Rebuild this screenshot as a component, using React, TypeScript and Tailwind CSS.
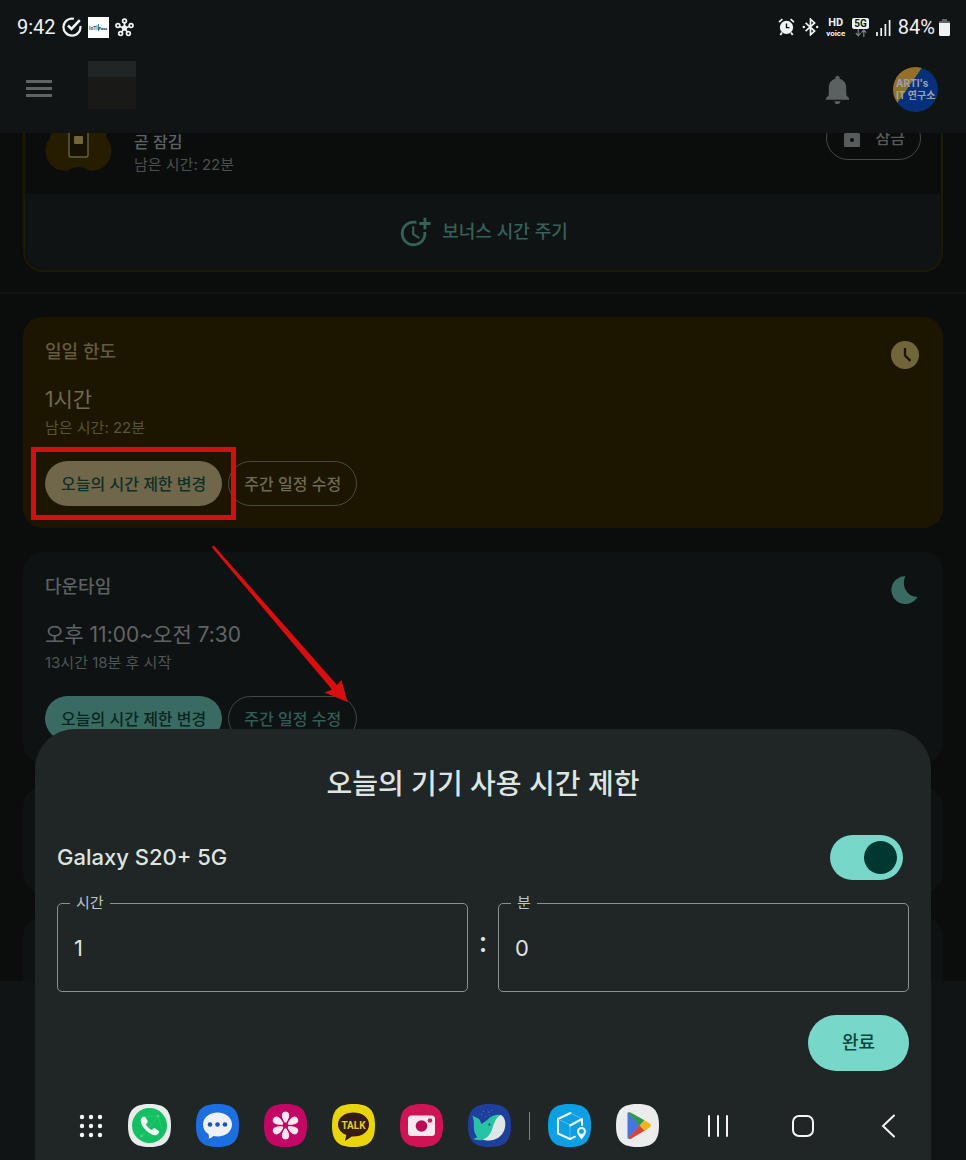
import React, { useState } from "react";
import { MdMoreTime, MdNotifications } from "react-icons/md";

const SQUIRCLE =
  "M21.5 0C37 0 43 6 43 21.5S37 43 21.5 43 0 37 0 21.5 6 0 21.5 0Z";

const StatusBar: React.FC = () => (
  <div className="flex h-[54px] items-center justify-between pl-[17px] pr-4 font-['Roboto'] text-xl text-[#f1f3f3]">
    <div className="flex items-center gap-[6px]">
      <span>9:42</span>
      <svg width="20" height="20" viewBox="0 0 20 20" fill="none" stroke="currentColor" strokeWidth="2.2">
        <path d="M12 1.8A8.5 8.5 0 1 0 18.4 9" />
        <path d="M6 8.5 9.5 12 17.8 3.2" strokeWidth="2.6" />
      </svg>
      <svg width="21" height="21" viewBox="0 0 21 21">
        <rect width="21" height="21" fill="#fdfefe" />
        <text x="1" y="12.5" fontSize="5" fontWeight="700" fill="#3b5560">IoT</text>
        <path d="M9 8v5M10.5 7v7" stroke="#2f8fb5" strokeWidth="1" />
        <text x="10.5" y="12.5" fontSize="4" fontWeight="700" fill="#222">Pass</text>
      </svg>
      <svg width="19" height="19" viewBox="0 0 19 19" fill="none" stroke="currentColor" strokeWidth="1.7">
        <path d="M9.5 5v4M4 8.2l4 1.6M15 8.2l-4 1.6M6.6 14.2 8.8 11M12.4 14.2 10.2 11" />
        <circle cx="9.5" cy="10" r="1.8" fill="currentColor" />
        <circle cx="9.5" cy="3" r="1.9" />
        <circle cx="2.9" cy="7.6" r="1.9" />
        <circle cx="16.1" cy="7.6" r="1.9" />
        <circle cx="5.6" cy="15.6" r="1.9" />
        <circle cx="13.4" cy="15.6" r="1.9" />
      </svg>
    </div>
    <div className="flex items-center gap-[7px]">
      <svg width="17" height="18" viewBox="0 0 17 18" fill="none" stroke="currentColor">
        <path d="M1 4.2 4.4 1.2M16 4.2l-3.4-3" strokeWidth="1.7" />
        <circle cx="8.5" cy="9.4" r="6.6" fill="currentColor" stroke="none" />
        <path d="M4 14.5 2.3 17M13 14.5l1.7 2.5" strokeWidth="1.8" />
        <path d="M8.5 5.4v4.2h3" stroke="#101415" strokeWidth="1.4" />
      </svg>
      <svg width="17" height="18" viewBox="0 0 17 18" fill="none" stroke="currentColor" strokeWidth="1.7">
        <path d="m3.6 4.8 9 8.2-4.1 3.8V1.2L12.6 5l-9 8.2" />
        <circle cx="1.8" cy="9" r="1.2" fill="currentColor" stroke="none" />
        <circle cx="15.2" cy="9" r="1.2" fill="currentColor" stroke="none" />
      </svg>
      <div className="flex flex-col items-center font-bold">
        <span className="text-[11px] leading-[12px]">HD</span>
        <span className="text-[8px] leading-[9px]">voice</span>
      </div>
      <div className="flex flex-col items-center">
        <span className="rounded-xs bg-[#f1f3f3] px-[2px] text-[10px] font-bold leading-[11px] text-[#101415]">
          5G
        </span>
        <svg width="12" height="8" viewBox="0 0 12 8" fill="none" stroke="#7d8283" strokeWidth="1.2">
          <path d="M3.2 0v6.6M.8 4.2l2.4 2.6 2.4-2.6M8.8 8V1.2M6.4 3.6 8.8 1l2.4 2.6" />
        </svg>
      </div>
      <svg width="15" height="17" viewBox="0 0 15 17" stroke="currentColor" strokeWidth="1.7">
        <path d="M1 17v-4M5.2 17V9M9.4 17V5M13.6 17V1" />
      </svg>
      <div className="flex items-center gap-1">
        <span>84%</span>
        <svg width="11" height="17" viewBox="0 0 11 17">
          <path d="M3 0h5v2h2a1 1 0 0 1 1 1v2H0V3a1 1 0 0 1 1-1h2z" fill="#5f6465" />
          <path d="M0 4h11v11.5a1.5 1.5 0 0 1-1.5 1.5h-8A1.5 1.5 0 0 1 0 15.5z" fill="currentColor" />
        </svg>
      </div>
    </div>
  </div>
);

const AppBar: React.FC = () => (
  <div className="flex h-[79px] items-center justify-between pb-[9px] pl-[26px] pr-7">
    <div className="flex items-center gap-9">
      <button type="button" aria-label="메뉴" className="text-[#5f6364]">
        <svg width="26" height="18" viewBox="0 0 26 18" fill="currentColor">
          <path d="M0 0h26v3H0zM0 7h26v3H0zM0 14h26v3H0z" />
        </svg>
      </button>
      <div className="mb-2 h-12 w-12 border-t-[16px] border-[#212526] bg-[#191a18]" />
    </div>
    <div className="flex items-center gap-[38px]">
      <button type="button" aria-label="알림" className="text-[#5b6061]">
        <MdNotifications size={35} />
      </button>
      <button
        type="button"
        className="flex h-[45px] w-[45px] flex-col justify-center overflow-hidden rounded-full bg-[linear-gradient(125deg,#93712c_38%,#06307a_39%)] pl-[3px] text-left text-[10px] font-bold leading-[12px] text-[#9aa1b0]"
      >
        <span className="whitespace-nowrap">ARTI's</span>
        <span className="whitespace-nowrap">IT 연구소</span>
      </button>
    </div>
  </div>
);

const DeviceCard: React.FC = () => (
  <div className="-mt-10 overflow-hidden rounded-[20px] border-2 border-[#1f1900]">
    <div className="flex h-[99px] items-center px-5 pb-[14px]">
      <svg width="67" height="66" viewBox="0 0 67 66">
        <path
          d="M33 0C45 0 62 2 62 18c0 9-2 12 1 17 4 5 4 10 3 15-2 10-12 18-23 15-4-2-6-3-9.500-3s-6 1-10 3C13 68 3 60 1 50c-1-5-1-10 3-15 3-5 1-8 1-17C5 2 21 0 33 0z"
          fill="#261c00"
        />
        <rect x="24" y="14" width="19" height="38" rx="2" fill="#161202" stroke="#6b6238" strokeWidth="1.4" />
        <rect x="29" y="31" width="9" height="8" rx="1" fill="#70663a" />
      </svg>
      <div className="ml-[22px] flex-1 pt-[30px]">
        <p className="text-base font-medium leading-6 text-[#5e6262]">곧 잠김</p>
        <p className="text-[15px] leading-[22px] text-[#4c5050]">남은 시간: 22분</p>
      </div>
      <button
        type="button"
        className="flex h-11 items-center gap-[14px] rounded-full border border-[#454949] px-[15px] text-base font-medium text-[#575b5b]"
      >
        <svg width="20" height="22" viewBox="0 0 20 22">
          <path d="M6 7V4a4 4 0 0 1 8 0v3" fill="none" stroke="currentColor" strokeWidth="2" />
          <rect x="2" y="6" width="16" height="14" rx="1.5" fill="currentColor" />
          <circle cx="10" cy="13" r="2" fill="#0b0d0d" />
        </svg>
        잠금
      </button>
    </div>
    <button
      type="button"
      className="flex h-[76px] w-full items-center justify-center gap-[10px] bg-[#0f1314] text-lg font-medium text-[#356159]"
    >
      <MdMoreTime size={34} />
      보너스 시간 주기
    </button>
  </div>
);

type LimitCardProps = {
  title: string;
  value: string;
  note: string;
  icon: React.ReactNode;
  warm?: boolean;
  children?: React.ReactNode;
};

const LimitCard: React.FC<LimitCardProps> = ({ title, value, note, icon, warm, children }) => (
  <section className={`flex items-start justify-between rounded-[20px] p-[22px] ${warm ? "bg-[#1c1600]" : "bg-[#0e1213]"}`}>
    <div>
      <h2 className={`text-lg font-medium leading-[26px] ${warm ? "text-[#645c3d]" : "text-[#5c6161]"}`}>
        {title}
      </h2>
      <p className={`mt-[21px] text-[21px] leading-7 ${warm ? "text-[#6f6a56]" : "text-[#606464]"}`}>{value}</p>
      <p className={`pt-[3px] text-[15px] leading-[22px] ${warm ? "text-[#5a5338]" : "text-[#505555]"}`}>{note}</p>
      <div className="mt-[22px] flex gap-[6px] text-base font-medium">
        <div className="relative">
          <button
            type="button"
            className={`h-[45px] rounded-full px-4 ${warm ? "bg-[#70674a] text-[#0c2f28]" : "bg-[#3a6b62] text-[#06251f]"}`}
          >
            오늘의 시간 제한 변경
          </button>
          {children}
        </div>
        <button
          type="button"
          className={`h-[45px] rounded-full border px-[15px] ${warm ? "border-[#484a42] text-[#6f6a56]" : "border-[#414646] text-[#315d54]"}`}
        >
          주간 일정 수정
        </button>
      </div>
    </div>
    <div className="m-[2px]">{icon}</div>
  </section>
);

// red frame round the button and the arrow that starts under it
const Highlight: React.FC = () => (
  <>
    <div className="pointer-events-none absolute -inset-x-[14px] -inset-y-[14px] border-[5px] border-[#cf1111]" />
    <svg
      width="140"
      height="160"
      viewBox="0 0 140 160"
      className="pointer-events-none absolute left-[166px] top-[84px] z-10 max-w-none"
    >
      <path d="M.8 2.2 2.8.6 126 140 130.500 135 136.500 157 113.500 147.500 121 144.500Z" fill="#d90f0f" />
    </svg>
  </>
);

type TimeFieldProps = { id: string; label: string; initial: string };

const TimeField: React.FC<TimeFieldProps> = ({ id, label, initial }) => {
  const [value, setValue] = useState(initial);
  return (
    <fieldset className="min-w-0 flex-1 rounded-[5px] border border-[#899290] pb-px">
      <legend className="ml-3 px-[6px] text-[15px] leading-6 text-[#bcc6c3]">
        <label htmlFor={id}>{label}</label>
      </legend>
      <input
        id={id}
        inputMode="numeric"
        value={value}
        onChange={(e) => setValue(e.target.value)}
        className="mb-[10px] h-[65px] w-full bg-transparent px-4 text-[22px] text-[#dde4e2] outline-none"
      />
    </fieldset>
  );
};

const TimeLimitSheet: React.FC = () => {
  const [enabled, setEnabled] = useState(true);
  return (
    <div className="px-[22px] pt-[33px]">
      <h1 className="text-center text-[28px] font-medium leading-[44px] text-[#dde4e2]">
        오늘의 기기 사용 시간 제한
      </h1>
      <div className="mt-[29px] flex h-[45px] items-center justify-between pr-[6px]">
        <label htmlFor="device-limit" className="text-[22px] font-medium text-[#dde4e2]">
          Galaxy S20+ 5G
        </label>
        <input
          id="device-limit"
          type="checkbox"
          role="switch"
          checked={enabled}
          onChange={(e) => setEnabled(e.target.checked)}
          className="h-[45px] w-[73px] appearance-none rounded-full bg-[#4a5654] p-[6px] before:block before:h-[33px] before:w-[33px] before:rounded-full before:bg-[#003730] checked:bg-[#77d8c9] checked:before:ml-auto"
        />
      </div>
      <div className="mt-[11px] flex">
        <TimeField id="hours" label="시간" initial="1" />
        <span className="flex w-[30px] items-center justify-center text-[28px] font-medium text-[#dde4e2]">:</span>
        <TimeField id="minutes" label="분" initial="0" />
      </div>
      <div className="mt-[23px] flex justify-end">
        <button
          type="button"
          className="h-14 rounded-full bg-[#77d8c9] px-[34px] text-lg font-medium text-[#08453c]"
        >
          완료
        </button>
      </div>
    </div>
  );
};

const AppIcon: React.FC<{ label: string; fill: string; children: React.ReactNode }> = ({ label, fill, children }) => (
  <button type="button" aria-label={label}>
    <svg width="43" height="43" viewBox="0 0 43 43">
      <path d={SQUIRCLE} fill={fill} />
      {children}
    </svg>
  </button>
);

const Dock: React.FC = () => (
  <nav className="mt-[33px] flex items-center justify-between pl-11 pr-[31px] pb-[13px]">
    <div className="flex items-center gap-[25px]">
      <button type="button" aria-label="앱스">
        <svg width="24" height="24" viewBox="0 0 24 24" fill="#f7f9f9">
          {[3, 12, 21].map((y) => [3, 12, 21].map((x) => <circle key={`${x}-${y}`} cx={x} cy={y} r="2.2" />))}
        </svg>
      </button>
      <AppIcon label="전화" fill="#e9eceb">
        <circle cx="21.500" cy="21.500" r="17.500" fill="#14bf63" />
        <path d="m12 13 18-1-16 20M30 12l4 13" fill="none" stroke="#4fd38a" strokeWidth=".4" />
        <circle cx="30" cy="12" r="1.200" fill="#4fd38a" />
        <circle cx="13.500" cy="32" r="1.300" fill="#4fd38a" />
        <path
          d="M13.200 14.800c.9-1.800 3-3 4.400-1.300l1.800 3c.8 1.500-.1 2.500-1.200 3.500-.5.600.2 1.800 2 3.600s3.200 2.600 3.800 2.100c1.200-1.200 2.200-1.800 3.600-.9l2.600 1.800c1.700 1.300.5 3.300-1.200 4.200-3 1.500-7.200-.8-11.200-4.800s-6-8.200-4.600-11.200z"
          fill="#f3f8f5"
        />
      </AppIcon>
      <AppIcon label="메시지" fill="#1c6fe0">
        <path
          d="M21.500 8.500c8.300 0 14.500 5 14.500 12s-6.200 12-14.500 12c-1.600 0-3-.2-4.200-.5-1.300 1.300-2.800 2.400-4.600 2.700.5-1.500.3-3-.3-4.700C9 28 7 24.500 7 20.500c0-7 6.200-12 14.500-12z"
          fill="#eef1f5"
        />
        <circle cx="14" cy="20.500" r="2.300" fill="#1b55b8" />
        <circle cx="21.500" cy="20.500" r="2.300" fill="#1b55b8" />
        <circle cx="29" cy="20.500" r="2.300" fill="#1b55b8" />
      </AppIcon>
      <AppIcon label="갤러리" fill="#c20864">
        <g fill="#fbe9f1">
          {[0, 60, 120, 180, 240, 300].map((a) => (
            <path
              key={a}
              d="M21.500 19C19.500 16 18.300 13.500 18.300 11.200a3.200 3.200 0 0 1 6.400 0c0 2.300-1.200 4.800-3.200 7.800z"
              transform={`rotate(${a} 21.500 21.500)`}
              stroke="#fbe9f1"
              strokeWidth="1"
            />
          ))}
        </g>
        <circle cx="21.500" cy="21.500" r="2.900" fill="#c20864" />
      </AppIcon>
      <AppIcon label="카카오톡" fill="#ead50c">
        <path
          d="M21.500 8.500C29.800 8.500 37 13 37 20.500s-7 12-15.500 12h-1.700L13 37l1.300-6C9.500 29 6 25.500 6 20.500c0-7.500 7.200-12 15.500-12z"
          fill="#351d15"
        />
        <text
          x="21.500"
          y="25"
          textAnchor="middle"
          fontFamily="Roboto"
          fontSize="10"
          fontWeight="700"
          fill="#e6cf25"
        >
          TALK
        </text>
      </AppIcon>
      <AppIcon label="카메라" fill="#cf1455">
        <rect x="8" y="11.500" width="27" height="20.500" rx="3.500" fill="#f8e9ef" />
        <circle cx="21.500" cy="22" r="5.800" fill="#b80d55" />
        <circle cx="30" cy="16.500" r="2.300" fill="#c02a4c" />
      </AppIcon>
      <AppIcon label="웨일" fill="#1f3f9c">
        <path
          d="M4.500 11.500c1.500 1.800 4.500 2 6.500 3.500 1.800 1.500 1.500 4 2.500 5 2.500-1.200 5-3.500 7.500-5.700C23.500 12 26.500 11 30 10.800c2 0 4 .5 5 2L26 35c-3 1.200-7 1.500-11 1-4 .5-7.500.2-10-1.200 2.200-.2 3.500-1 4-2.300C5 28 6 22 5.800 18.500 5.800 15.500 4.800 13.500 4.500 11.500z"
          fill="#27c4a3"
        />
        <path
          d="M32.500 11c4.500 1.300 6 8.500 4 14.500C34 32.500 28 36.500 21 36.500c-2.500 0-4.700-.4-6.500-1.200 4-.8 6.500-3.300 8.500-7.300 2.500-5 3-13.500 9.500-17z"
          fill="#dfe6e6"
        />
        <circle cx="21.500" cy="20.500" r="1" fill="#153b6b" />
        <path d="M13 10.500h1M17 12.500h1M15 7.500h1M20 8h1M23 6.500h1M21 11h1" stroke="#2f83c8" strokeWidth="1" />
      </AppIcon>
      <div className="-mx-[7px] h-7 w-px bg-[#7d8382]" />
      <AppIcon label="스마트택배" fill="#0c9fe3">
        <g fill="none" stroke="#eef7fb" strokeWidth="2" strokeLinecap="round" strokeLinejoin="round">
          <path d="M22.500 9 10 15v14.500l12 5.500 5-2.300" />
          <path d="m22 21.500 12-6.500v6" />
        </g>
        <path d="m10 15 12 6v13M22.500 9 34 15" fill="none" stroke="#8fd2f0" strokeWidth=".6" />
        <path d="M33.500 35.500c-2.500-3.300-4.500-5.500-4.500-8a4.500 4.500 0 0 1 9 0c0 2.500-2 4.700-4.500 8z" fill="#eef7fb" />
        <circle cx="33.500" cy="27.500" r="2.400" fill="#0c9fe3" />
      </AppIcon>
      <AppIcon label="Play 스토어" fill="#ebedec">
        <path d="M11.500 9.500v24.500c0 .6.300.8.700.6L24 21.500 12.200 8.600c-.4-.2-.7.200-.7.900z" fill="#4675e2" />
        <path d="M12 8.800c.8-.7 2-.6 3 0l13.500 7.500L23.500 22z" fill="#319850" />
        <path d="M28.500 16.300 33.700 19.500c1.600 1 1.600 3 0 4L28.500 27l-5.200-5.300z" fill="#f2b418" />
        <path d="m12 34.300 11.400-12.800 5.100 5.300-13.500 7.900c-1 .5-2.200.500-3-.400z" fill="#d8453b" />
      </AppIcon>
    </div>
    <div className="flex items-center gap-[61px] text-[#f4f6f6]">
      <button type="button" aria-label="최근 앱">
        <svg width="24" height="24" viewBox="0 0 24 24" stroke="currentColor" strokeWidth="2" strokeLinecap="round">
          <path d="M3 2v20M12 2v20M21 2v20" />
        </svg>
      </button>
      <button type="button" aria-label="홈">
        <svg width="24" height="24" viewBox="0 0 24 24" fill="none" stroke="currentColor" strokeWidth="2">
          <rect x="2" y="2" width="20" height="20" rx="6" />
        </svg>
      </button>
      <button type="button" aria-label="뒤로">
        <svg width="24" height="24" viewBox="0 0 24 24" fill="none" stroke="currentColor" strokeWidth="2" strokeLinecap="round">
          <path d="M18 1.500 7 12l11 10.500" />
        </svg>
      </button>
    </div>
  </nav>
);

const App: React.FC = () => {
  return (
    <div className="relative flex h-screen flex-col overflow-hidden bg-[#0b0d0c] font-['Inter','Noto_Sans_CJK_KR',sans-serif]">
      <header className="shrink-0 bg-[#101415]">
        <StatusBar />
        <AppBar />
      </header>

      <main className="min-h-0 flex-1 overflow-hidden">
        <div className="px-[23px] pb-5">
          <DeviceCard />
        </div>
        <hr className="border-t-2 border-[#111515]" />
        <div className="flex flex-col gap-6 px-[23px] pt-[23px]">
          <LimitCard
            warm
            title="일일 한도"
            value="1시간"
            note="남은 시간: 22분"
            icon={
              <svg width="28" height="28" viewBox="0 0 28 28">
                <circle cx="14" cy="14" r="14" fill="#70663a" />
                <path d="M14 7v7.500l5.500 5.300" fill="none" stroke="#1c1600" strokeWidth="2.400" />
              </svg>
            }
          >
            <Highlight />
          </LimitCard>
          <LimitCard
            title="다운타임"
            value="오후 11:00~오전 7:30"
            note="13시간 18분 후 시작"
            icon={
              <svg width="28" height="28" viewBox="0 0 28 28">
                <path d="M14.500 0C10 8.500 15 20.500 26.500 21A14 14 0 1 1 14.500 0z" fill="#3a6b62" />
              </svg>
            }
          />
          <div className="h-[106px] shrink-0 rounded-[20px] bg-[#0e1213]" />
          <div className="h-[106px] shrink-0 rounded-[20px] bg-[#0e1213]" />
        </div>
      </main>
      <div className="h-[179px] shrink-0 bg-[#101415]" />

      <div className="absolute inset-x-[35px] bottom-0 rounded-t-[40px] bg-[#202525]">
        <TimeLimitSheet />
        <Dock />
      </div>
    </div>
  );
};

export default App;
